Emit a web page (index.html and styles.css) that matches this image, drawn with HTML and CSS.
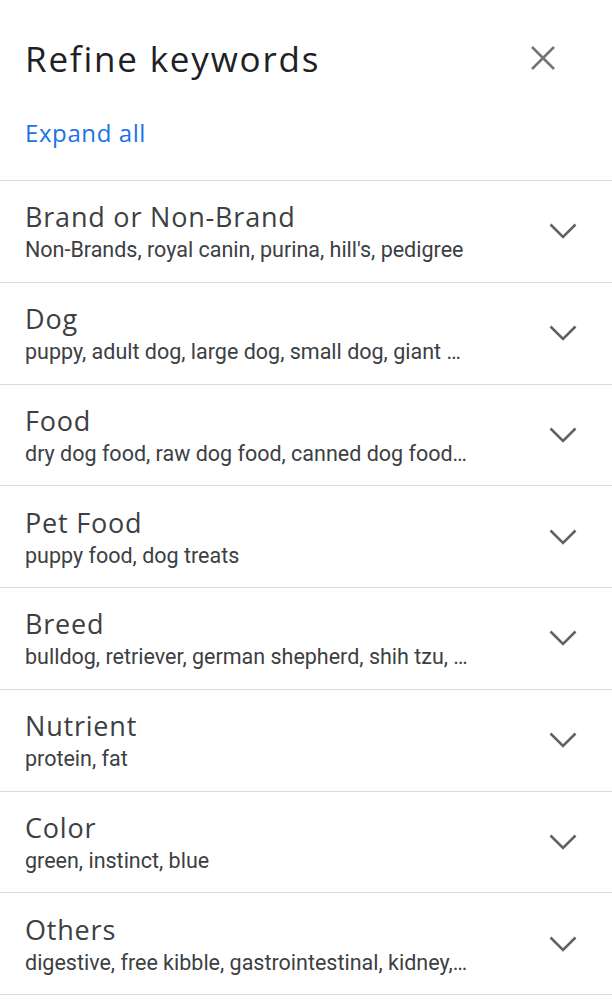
FILE: index.html
```html
<!DOCTYPE html>
<html>
<head>
<meta charset="utf-8">
<link rel="stylesheet" href="styles.css">
</head>
<body>
<div class="panel">
  <header class="head">
    <h1 class="title">Refine keywords</h1>
    <button class="close" aria-label="Close">
      <svg width="24" height="24" viewBox="0 0 24 24"><path d="M1 1L23 23M23 1L1 23" stroke="#757575" stroke-width="2.6" fill="none"/></svg>
    </button>
  </header>
  <div class="expand">Expand all</div>
  <ul class="list">
    <li class="row"><div class="text"><div class="name">Brand or Non-Brand</div><div class="sub">Non-Brands, royal canin, purina, hill's, pedigree</div></div><svg class="chev" width="28" height="16" viewBox="0 0 28 16"><path d="M1.5 1.5L14 14L26.5 1.5" stroke="#5f6368" stroke-width="2.6" fill="none"/></svg></li>
    <li class="row"><div class="text"><div class="name">Dog</div><div class="sub">puppy, adult dog, large dog, small dog, giant …</div></div><svg class="chev" width="28" height="16" viewBox="0 0 28 16"><path d="M1.5 1.5L14 14L26.5 1.5" stroke="#5f6368" stroke-width="2.6" fill="none"/></svg></li>
    <li class="row"><div class="text"><div class="name">Food</div><div class="sub">dry dog food, raw dog food, canned dog food…</div></div><svg class="chev" width="28" height="16" viewBox="0 0 28 16"><path d="M1.5 1.5L14 14L26.5 1.5" stroke="#5f6368" stroke-width="2.6" fill="none"/></svg></li>
    <li class="row"><div class="text"><div class="name">Pet Food</div><div class="sub">puppy food, dog treats</div></div><svg class="chev" width="28" height="16" viewBox="0 0 28 16"><path d="M1.5 1.5L14 14L26.5 1.5" stroke="#5f6368" stroke-width="2.6" fill="none"/></svg></li>
    <li class="row"><div class="text"><div class="name">Breed</div><div class="sub">bulldog, retriever, german shepherd, shih tzu, …</div></div><svg class="chev" width="28" height="16" viewBox="0 0 28 16"><path d="M1.5 1.5L14 14L26.5 1.5" stroke="#5f6368" stroke-width="2.6" fill="none"/></svg></li>
    <li class="row"><div class="text"><div class="name">Nutrient</div><div class="sub">protein, fat</div></div><svg class="chev" width="28" height="16" viewBox="0 0 28 16"><path d="M1.5 1.5L14 14L26.5 1.5" stroke="#5f6368" stroke-width="2.6" fill="none"/></svg></li>
    <li class="row"><div class="text"><div class="name">Color</div><div class="sub">green, instinct, blue</div></div><svg class="chev" width="28" height="16" viewBox="0 0 28 16"><path d="M1.5 1.5L14 14L26.5 1.5" stroke="#5f6368" stroke-width="2.6" fill="none"/></svg></li>
    <li class="row"><div class="text"><div class="name">Others</div><div class="sub">digestive, free kibble, gastrointestinal, kidney,…</div></div><svg class="chev" width="28" height="16" viewBox="0 0 28 16"><path d="M1.5 1.5L14 14L26.5 1.5" stroke="#5f6368" stroke-width="2.6" fill="none"/></svg></li>
  </ul>
</div>
</body>
</html>
```
FILE: styles.css
```css
* { box-sizing: border-box; }
body { margin: 0; background: #fff; font-family: Roboto, "Liberation Sans", sans-serif; }
.panel { width: 612px; }
.head { display: flex; justify-content: space-between; padding: 36px 57px 0 25px; height: 100px; }
.title { margin: 0; font-family: "Open Sans", sans-serif; font-weight: 400; font-size: 35px; color: #202124; letter-spacing: 1.8px; line-height: 46px; }
.close { border: 0; background: none; padding: 0; margin-top: 10px; width: 24px; height: 24px; display: flex; }
.expand { padding: 0 25px; font-family: "Open Sans", sans-serif; font-size: 24px; color: #1a73e8; height: 80px; line-height: 34px; padding-top: 16px; letter-spacing: 0.6px; }
.list { list-style: none; margin: 0; padding: 0; border-top: 1px solid #dadce0; }
.row { display: flex; align-items: center; justify-content: space-between; height: 101.75px; border-bottom: 1px solid #dadce0; padding: 0 35px 0 25px; }
.text { padding-top: 2px; }
.name { font-family: "Open Sans", sans-serif; font-size: 27px; color: #3c4043; line-height: 32px; letter-spacing: 0.8px; }
.sub { font-size: 21.5px; color: #3c4043; line-height: 26px; margin-top: 4px; }
.chev { flex: none; }
```
